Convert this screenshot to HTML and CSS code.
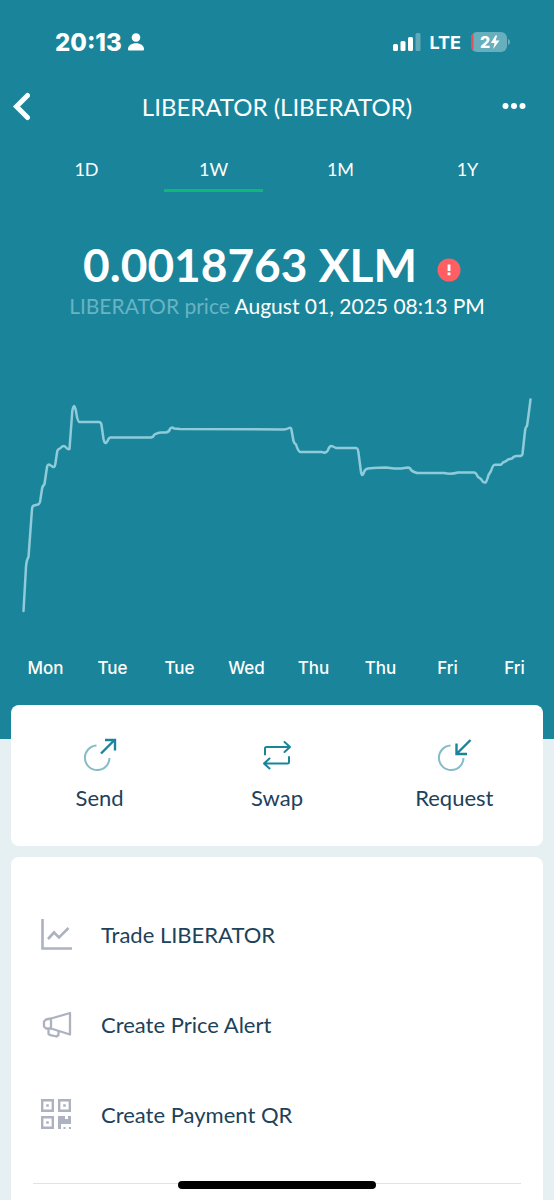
FILE: index.html
```html
<!DOCTYPE html>
<html lang="en">
<head>
  <meta charset="UTF-8" />
  <meta name="viewport" content="width=device-width, initial-scale=1.0"/>
  <title>LIBERATOR (LIBERATOR)</title>
  <link rel="stylesheet" href="styles.css">
</head>
<body>
  <header class="hero">
    <div class="status-bar">
      <div class="status-left">
        <span class="time">20:13</span>
        <svg width="16" height="18" viewBox="0 0 16 18" fill="#fff" aria-hidden="true">
          <circle cx="8" cy="4.500" r="4.300"/>
          <path d="M0 16.200C0 12.600 3.600 10.300 8 10.300s8 2.300 8 5.900c0 .9-.5 1.300-1.300 1.300H1.300C.5 17.500 0 17.100 0 16.200z"/>
        </svg>
      </div>
      <div class="status-right">
        <svg width="28" height="18" viewBox="0 0 28 18" fill="#fff" aria-hidden="true">
          <rect x="0" y="11" width="5" height="7" rx="1.5"/>
          <rect x="7.5" y="8" width="5" height="10" rx="1.5"/>
          <rect x="15" y="4" width="5" height="14" rx="1.5"/>
          <rect x="22.5" y="0" width="5" height="18" rx="1.5" opacity=".3"/>
        </svg>
        <span class="network">LTE</span>
        <svg width="40" height="20" viewBox="0 0 40 20" aria-hidden="true">
          <rect x="1" y="0" width="36" height="20" rx="6" fill="#68afbd"/>
          <path d="M3.500 1.200C1.800 2.400 1 4 1 6v8c0 2 .8 3.600 2.500 4.800z" fill="#e0525a"/>
          <path d="M38 7c1.500.6 2 1.700 2 3s-.5 2.400-2 3z" fill="#68afbd"/>
          <path d="M25.500 3.500 20.800 11h3.700l-1.300 6 6.300-8.500h-3.900l1.600-5z" fill="#fff"/>
          <text x="10" y="16" class="battery-level">2</text>
        </svg>
      </div>
    </div>

    <div class="nav-bar">
      <button class="icon-button" aria-label="Back">
        <svg width="18" height="30" viewBox="0 0 18 30" fill="none" stroke="#fff" stroke-width="5" stroke-linecap="round" stroke-linejoin="miter">
          <path d="M15.500 4.500 4.500 15.500l11 11"/>
        </svg>
      </button>
      <h1>LIBERATOR (LIBERATOR)</h1>
      <button class="icon-button" aria-label="More">
        <svg width="24" height="30" viewBox="0 0 24 30" fill="#fff">
          <circle cx="3.500" cy="15" r="3"/>
          <circle cx="12" cy="15" r="3"/>
          <circle cx="20.500" cy="15" r="3"/>
        </svg>
      </button>
    </div>

    <nav class="tabs">
      <button class="tab">1D</button>
      <button class="tab active">1W</button>
      <button class="tab">1M</button>
      <button class="tab">1Y</button>
    </nav>

    <div class="price">
      <span class="amount">0.0018763 XLM</span>
      <svg class="alert" width="24" height="24" viewBox="0 0 24 24" aria-hidden="true">
        <circle cx="12" cy="12" r="11.500" fill="#ff5f63"/>
        <path d="M10.600 6.500h2.800v6.500h-2.800zM10.600 14.500h2.800v2.800h-2.800z" fill="#fff"/>
      </svg>
    </div>
    <p class="price-date"><span>LIBERATOR price</span> August 01, 2025 08:13 PM</p>

    <svg class="chart" viewBox="0 0 554 250" fill="none" aria-hidden="true">
      <path d="M23.500 231 L26 187 Q26.500 180 28.500 177 L32 129 Q32.300 126 34 125.500 L38 124.500 Q40 124 40.500 119 L42 109 Q42.500 106 44.500 104 L47 87 Q48 83.500 50 85 L53 87 Q55 87.500 55.500 83 L57.300 71 Q58 69 60 68.500 Q63 65 65 66.500 Q68 70 69.500 69 L72.300 31 Q74 21 76 31 Q77.500 42 79.500 42 H99 Q101 42 101.500 45 L103.500 59 Q105 66 107.500 61 Q109 57 111 57.500 H151 Q153.500 57 154.500 54.500 Q158 52.500 161 52.500 H166 Q169 52 170 49 Q171.500 46.500 174 48.500 L180 49 L284 49.500 Q286 49.500 289 48 Q291 47 291.500 50 L293.500 61 Q294.500 64 296 64.500 Q298 71 300 72 H322 Q326 74 328 70 Q330 64.500 333 66.500 L336 68 H356 Q358 68 358.500 73 L361 92 Q362 98 364 92 Q365 89 368 88.500 Q380 87.500 386 87.500 L394 88.500 H401 L408 87.500 Q410 87.500 411 90 Q413 92 417 93 H444 Q451 94.500 458 92.500 H474 Q476 92.500 478 97 L481 99 Q483 103 485.500 102.500 Q487 101 488.500 95 L491 91 Q493 84.500 495 84.800 H501 L503 82.500 Q507 81 508 79.500 L512 78.500 Q514 75.500 518 76 Q522 76.500 522.500 74 L525 51 Q525.500 47 527 46 Q528.500 36 530.500 19.500" stroke="#8fcbd9" stroke-width="2.500" stroke-linecap="round" stroke-linejoin="round"/>
    </svg>

    <div class="days">
      <span>Mon</span>
      <span>Tue</span>
      <span>Tue</span>
      <span>Wed</span>
      <span>Thu</span>
      <span>Thu</span>
      <span>Fri</span>
      <span>Fri</span>
    </div>
  </header>

  <main class="content">
    <section class="card actions">
      <button class="action">
        <svg width="36" height="36" viewBox="0 0 36 36" fill="none" stroke-width="2">
          <path d="M14.500 8.500A12.300 12.300 0 1 0 27.500 21" stroke="#86bcc7"/>
          <path d="M19 16.500 32.500 3M23 3h10v10.500" stroke="#1a859a" stroke-width="2.400"/>
        </svg>
        Send
      </button>
      <button class="action">
        <svg width="36" height="36" viewBox="0 0 36 36" fill="none" stroke="#1a859a" stroke-width="2" stroke-linecap="round" stroke-linejoin="round">
          <path d="M6 17.500v-6q0-1.500 1.500-1.500H31M25.500 5l5.500 5-5.500 5"/>
          <path d="M30 20v5q0 1.500-1.500 1.500H5M10.500 21.500l-5.500 5 5.500 5"/>
        </svg>
        Swap
      </button>
      <button class="action">
        <svg width="36" height="36" viewBox="0 0 36 36" fill="none" stroke-width="2">
          <path d="M14.500 8.500A12.300 12.300 0 1 0 27.500 21" stroke="#86bcc7"/>
          <path d="M34.500 3 21.500 16M20.500 6.500v10.500h10.500" stroke="#1a859a" stroke-width="2.400"/>
        </svg>
        Request
      </button>
    </section>

    <section class="card menu">
      <a class="menu-item" href="#">
        <svg width="32" height="32" viewBox="0 0 32 32" fill="none" stroke="#adb2c1" stroke-width="2.600">
          <path d="M2.500 1v29.500H32"/>
          <path d="M8 21l6-6.500 5 5 9.500-9.500"/>
        </svg>
        Trade LIBERATOR
      </a>
      <a class="menu-item" href="#">
        <svg width="32" height="32" viewBox="0 0 32 32" fill="none" stroke="#adb2c1" stroke-width="2.300" stroke-linejoin="round">
          <path d="M11 10.500 30 5v21.500L11 20.500z"/>
          <path d="M11 10.500 6 11.500 4 13.500v5l2 2 5 0"/>
          <path d="M8.500 20.500v5.500l2 1.200 6 1.300 2-1.500v-4.500"/>
        </svg>
        Create Price Alert
      </a>
      <a class="menu-item" href="#">
        <svg width="32" height="32" viewBox="0 0 32 32" fill="#adb2c1">
          <path d="M2.200 2.200h10.600v10.600H2.200zM19.200 2.200h10.600v10.600H19.200zM2.200 19.200h10.600v10.600H2.200z" fill="none" stroke="#adb2c1" stroke-width="2.400"/>
          <path d="M6.200 6.200h2.600v2.600H6.200zM23.200 6.200h2.600v2.600h-2.600zM6.200 23.200h2.600v2.600H6.200z"/>
          <path d="M18 18h7v3h3v-3h3v8h-10v5h-3zM23.500 29h2v2h-2zM29 29h2v2h-2z"/>
        </svg>
        Create Payment QR
      </a>
      <hr>
    </section>
  </main>

  <div class="home-indicator"></div>
</body>
</html>
```

FILE: styles.css
```css
* {
  box-sizing: border-box;
}

body {
  margin: 0;
  min-height: 100vh;
  display: flex;
  flex-direction: column;
  font-family: Lato, "Open Sans", sans-serif;
  color: #1d4259;
  background-color: #e6f0f3;
}

button {
  padding: 0;
  border: none;
  background: none;
  color: inherit;
  font: inherit;
  cursor: pointer;
}

svg {
  display: block;
  flex-shrink: 0;
}

.hero {
  padding-bottom: 59px;
  color: white;
  background-color: #1a859a;
}

.status-bar {
  display: flex;
  justify-content: space-between;
  align-items: center;
  height: 84px;
  padding: 0 44px 0 55px;
  font-family: Inter, sans-serif;
}

.status-left {
  display: flex;
  align-items: center;
  gap: 6px;
}

.status-right {
  display: flex;
  align-items: center;
  gap: 9px;
}

.time {
  font-size: 24px;
  font-weight: 800;
}

.network {
  font-size: 18px;
  font-weight: 700;
}

.battery-level {
  font-size: 16px;
  font-weight: 800;
  fill: white;
}

.nav-bar {
  display: grid;
  grid-template-columns: 1fr auto 1fr;
  align-items: center;
  height: 44px;
  padding: 0 28px 0 12px;
}

.nav-bar h1 {
  margin: 0 0 0 16px;
  font-size: 24px;
  font-weight: 400;
}

.icon-button {
  width: 24px;
}

.icon-button:last-child {
  justify-self: end;
}

.tabs {
  display: grid;
  grid-template-columns: repeat(4, 1fr);
  gap: 28px;
  margin-top: 20px;
  padding: 0 37px;
}

.tab {
  height: 44px;
  border-bottom: 3px solid transparent;
  font-size: 18px;
}

.tab.active {
  border-bottom-color: #0fb877;
}

.price {
  display: flex;
  justify-content: center;
  align-items: center;
  gap: 20px;
  height: 50px;
  margin-top: 51px;
  padding: 0 10px 6px 0;
}

.amount {
  font-size: 46px;
  font-weight: 700;
  line-height: 46px;
}

.alert {
  margin-top: 10px;
}

.price-date {
  margin: 0;
  text-align: center;
  font-size: 21px;
  line-height: 26px;
}

.price-date span {
  color: #68b3c4;
}

.chart {
  width: 100%;
  margin-top: 61px;
}

.days {
  display: grid;
  grid-template-columns: repeat(8, 1fr);
  margin-top: 26px;
  padding: 0 6px 0 12px;
  font-family: Inter, sans-serif;
  font-size: 17px;
  font-weight: 500;
  line-height: 24px;
  text-align: center;
}

.content {
  flex: 1;
  display: flex;
  flex-direction: column;
  gap: 11px;
  margin-top: -34px;
  padding: 0 11px;
}

.card {
  border-radius: 8px;
  background-color: white;
}

.actions {
  display: grid;
  grid-template-columns: repeat(3, 1fr);
  padding: 32px 0 34px;
}

.action {
  display: flex;
  flex-direction: column;
  align-items: center;
  gap: 11px;
  font-size: 22px;
  line-height: 28px;
}

.menu {
  flex: 1;
  padding: 32px 22px 16px;
  border-radius: 8px 8px 0 0;
}

.menu-item {
  display: flex;
  align-items: center;
  gap: 29px;
  height: 90px;
  padding-left: 7px;
  color: inherit;
  font-size: 22px;
  text-decoration: none;
}

.menu hr {
  margin: 24px 0 0;
  border: none;
  border-top: 1px solid #e3e3e6;
}

.home-indicator {
  position: fixed;
  bottom: 11px;
  left: 50%;
  width: 198px;
  height: 8px;
  border-radius: 4px;
  background-color: black;
  transform: translateX(-50%);
}
```
